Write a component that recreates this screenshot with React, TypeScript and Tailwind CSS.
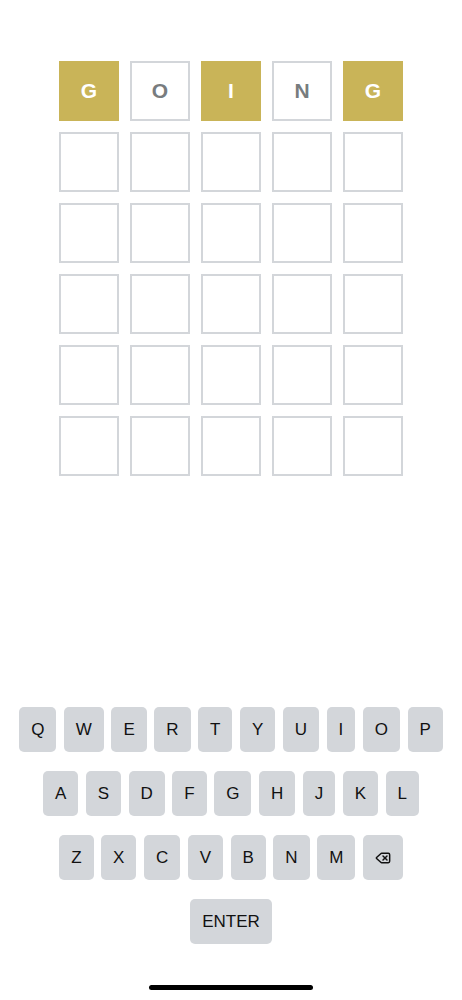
import React from "react";

const rows1 = ["Q", "W", "E", "R", "T", "Y", "U", "I", "O", "P"];
const rows2 = ["A", "S", "D", "F", "G", "H", "J", "K", "L"];
const rows3 = ["Z", "X", "C", "V", "B", "N", "M"];

const guess = [
  { l: "G", y: true },
  { l: "O", y: false },
  { l: "I", y: true },
  { l: "N", y: false },
  { l: "G", y: true },
];

function Key({ children }: { children: React.ReactNode }) {
  return (
    <div className="h-[45px] px-3 rounded-[5px] bg-[#d3d6da] flex items-center justify-center text-[17px] text-[#111] leading-none">
      {children}
    </div>
  );
}

function BackspaceIcon() {
  return (
    <svg width="16" height="16" viewBox="0 0 24 24" fill="none" stroke="#111" strokeWidth="2.2" strokeLinecap="round" strokeLinejoin="round">
      <path d="M10 5a2 2 0 0 0-1.344.519l-6.328 5.74a1 1 0 0 0 0 1.481l6.328 5.741A2 2 0 0 0 10 19h10a2 2 0 0 0 2-2V7a2 2 0 0 0-2-2z" />
      <path d="m12 9 6 6" />
      <path d="m18 9-6 6" />
    </svg>
  );
}

export default function App() {
  return (
    <div
      className="w-[462px] h-[1000px] bg-white flex flex-col items-center"
      style={{ fontFamily: '"Liberation Sans", Arial, sans-serif' }}
    >
      <div className="mt-[61px] flex flex-col gap-[11px]">
        {[0, 1, 2, 3, 4, 5].map((r) => (
          <div key={r} className="flex gap-[11px]">
            {[0, 1, 2, 3, 4].map((c) => {
              if (r === 0) {
                const g = guess[c];
                return g.y ? (
                  <div key={c} className="w-[60px] h-[60px] bg-[#c9b458] flex items-center justify-center text-white font-bold text-[21px]">
                    {g.l}
                  </div>
                ) : (
                  <div key={c} className="w-[60px] h-[60px] border-2 border-[#d3d6da] flex items-center justify-center text-[#787c7e] font-bold text-[21px]">
                    {g.l}
                  </div>
                );
              }
              return <div key={c} className="w-[60px] h-[60px] border-2 border-[#d3d6da]" />;
            })}
          </div>
        ))}
      </div>

      <div className="flex-1" />

      <div className="flex flex-col items-center gap-[19px]">
        <div className="flex gap-[7.5px]">
          {rows1.map((k) => (
            <Key key={k}>{k}</Key>
          ))}
        </div>
        <div className="flex gap-[7.5px]">
          {rows2.map((k) => (
            <Key key={k}>{k}</Key>
          ))}
        </div>
        <div className="flex gap-[7.5px]">
          {rows3.map((k) => (
            <Key key={k}>{k}</Key>
          ))}
          <Key>
            <BackspaceIcon />
          </Key>
        </div>
        <div className="flex">
          <Key>ENTER</Key>
        </div>
      </div>

      <div className="mt-[41px] mb-[10px] w-[164px] h-[5px] rounded-full bg-black" />
    </div>
  );
}
